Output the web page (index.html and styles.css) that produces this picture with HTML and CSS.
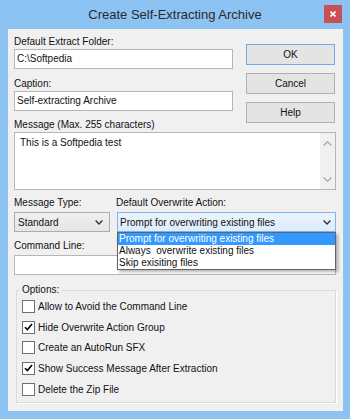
FILE: index.html
```html
<!DOCTYPE html>
<html lang="en">
<head>
    <meta charset="UTF-8">
    <title>Create Self-Extracting Archive</title>
    <link rel="stylesheet" href="styles.css">
</head>
<body>
<div class="window">
    <div class="titlebar">
        <span></span>
        <span class="title">Create Self-Extracting Archive</span>
        <span class="close">
            <svg width="6" height="6" viewBox="0 0 6 6"><path d="M0.5 0.5 L5.5 5.5 M5.5 0.5 L0.5 5.5" stroke="#fff" stroke-width="1.6"/></svg>
        </span>
    </div>

    <div class="dialog">
        <div class="top">
            <div class="fields">
                <div class="label">Default Extract Folder:</div>
                <div class="textbox">C:\Softpedia</div>
                <div class="label">Caption:</div>
                <div class="textbox">Self-extracting Archive</div>
                <div class="label msg-label">Message (Max. 255 characters)</div>
            </div>
            <div class="buttons">
                <div class="btn default">OK</div>
                <div class="btn">Cancel</div>
                <div class="btn">Help</div>
            </div>
        </div>

        <div class="memo">
            <div class="memo-text">This is a Softpedia test</div>
            <div class="vscroll">
                <svg width="9" height="5" viewBox="0 0 9 5"><path d="M0.5 4.5 L4.5 0.8 L8.5 4.5" fill="none" stroke="#a8a8a8" stroke-width="1.3"/></svg>
                <svg width="9" height="5" viewBox="0 0 9 5"><path d="M0.5 0.5 L4.5 4.2 L8.5 0.5" fill="none" stroke="#a8a8a8" stroke-width="1.3"/></svg>
            </div>
        </div>

        <div class="combo-row">
            <div class="combo-col type">
                <div class="label">Message Type:</div>
                <div class="combo">
                    <span>Standard</span>
                    <svg width="8" height="5" viewBox="0 0 8 5"><path d="M0.6 0.6 L4 4 L7.4 0.6" fill="none" stroke="#333" stroke-width="1.4"/></svg>
                </div>
            </div>
            <div class="combo-col action">
                <div class="label">Default Overwrite Action:</div>
                <div class="combo-wrap">
                    <div class="combo hot">
                        <span>Prompt for overwriting existing files</span>
                        <svg width="8" height="5" viewBox="0 0 8 5"><path d="M0.6 0.6 L4 4 L7.4 0.6" fill="none" stroke="#333" stroke-width="1.4"/></svg>
                    </div>
                    <ul class="droplist">
                        <li class="sel">Prompt for overwriting existing files</li>
                        <li>Always&nbsp; overwrite existing files</li>
                        <li>Skip exisiting files</li>
                    </ul>
                </div>
            </div>
        </div>

        <div class="label cmd-label">Command Line:</div>
        <div class="textbox cmd"></div>

        <fieldset class="options">
            <legend>Options:</legend>
            <div class="opt"><span class="box"></span>Allow to Avoid the Command Line</div>
            <div class="opt"><span class="box"><svg width="9" height="8" viewBox="0 0 9 8"><path d="M1 4.2 L3.4 6.6 L8 1" fill="none" stroke="#000" stroke-width="1.6"/></svg></span>Hide Overwrite Action Group</div>
            <div class="opt"><span class="box"></span>Create an AutoRun SFX</div>
            <div class="opt"><span class="box"><svg width="9" height="8" viewBox="0 0 9 8"><path d="M1 4.2 L3.4 6.6 L8 1" fill="none" stroke="#000" stroke-width="1.6"/></svg></span>Show Success Message After Extraction</div>
            <div class="opt"><span class="box"></span>Delete the Zip File</div>
        </fieldset>
    </div>
</div>
</body>
</html>
```

FILE: styles.css
```css
body {
    margin: 0;
    font-family: "Liberation Sans", Arial, sans-serif;
    font-size: 10px;
    color: #111;
}
.window {
    width: 350px;
    height: 419px;
    background: #8cc3f3;
    display: flex;
    flex-direction: column;
}
/* Title bar */
.titlebar {
    height: 29px;
    display: grid;
    grid-template-columns: 1fr auto 1fr;
    align-items: center;
}
.title {
    font-size: 13px;
    color: #2a2a2a;
}
.close {
    justify-self: end;
    align-self: start;
    margin: 5px 8px 0 0;
    width: 18px;
    height: 18px;
    background: #c85151;
    display: flex;
    align-items: center;
    justify-content: center;
}
/* Dialog body */
.dialog {
    margin: 0 7px 0 8px;
    height: 382px;
    box-sizing: border-box;
    background: #f0f0f0;
    padding: 6px 7px 0 6px;
}
.label {
    height: 14px;
    line-height: 14px;
    white-space: nowrap;
}
.textbox {
    height: 20px;
    box-sizing: border-box;
    border: 1px solid #b4b6bb;
    background: #fff;
    line-height: 18px;
    padding-left: 2px;
}
.textbox + .label {
    margin-top: 8px;
}
.fields .msg-label {
    margin-top: 7px;
}
.top {
    display: grid;
    grid-template-columns: 219px 89px;
    column-gap: 13px;
}
.fields {
    display: flex;
    flex-direction: column;
}
.buttons {
    display: flex;
    flex-direction: column;
    gap: 8px;
    padding-top: 9px;
}
.btn {
    height: 21px;
    box-sizing: border-box;
    border: 1px solid #b0b0b0;
    background: #e4e4e4;
    line-height: 19px;
    text-align: center;
}
.btn.default {
    border-color: #6eaaea;
}
/* Message box */
.memo {
    height: 58px;
    box-sizing: border-box;
    border: 1px solid #b4b6bb;
    background: #fff;
    display: flex;
}
.memo-text {
    flex: 1;
    padding: 3px 5px;
    line-height: 14px;
}
.vscroll {
    width: 15px;
    background: #f0f0f0;
    display: flex;
    flex-direction: column;
    justify-content: space-between;
    align-items: center;
    padding: 8px 0 7px;
}
/* Combo boxes */
.combo-row {
    display: flex;
    gap: 7px;
    margin-top: 6px;
}
.combo-col.type {
    width: 96px;
}
.combo-col.action {
    width: 219px;
}
.combo-col .label {
    margin-bottom: 2px;
}
.combo-col.action .label {
    margin-left: -1px;
}
.combo-wrap {
    position: relative;
}
.combo {
    height: 20px;
    box-sizing: border-box;
    border: 1px solid #acacac;
    background: linear-gradient(#f0f0f0, #e5e5e5);
    display: flex;
    align-items: center;
    justify-content: space-between;
    padding: 0 6px 0 3px;
}
.combo.hot {
    border-color: #7eb4ea;
    background: linear-gradient(#ecf4fc, #dcecfc);
    padding: 0 4px 0 2px;
}
.droplist {
    position: absolute;
    top: 100%;
    left: 0;
    right: 0;
    margin: 0;
    padding: 0;
    list-style: none;
    background: #fff;
    border: 1px solid #646464;
    box-shadow: 2px 2px 3px rgba(0, 0, 0, 0.3);
    z-index: 2;
}
.droplist li {
    line-height: 12px;
    padding-left: 1px;
    white-space: nowrap;
}
.droplist li.sel {
    background: #3399ff;
    color: #fff;
}
/* Command line */
.cmd-label {
    margin-top: 7px;
    margin-bottom: 2px;
}
/* Options group */
.options {
    margin: 9px 0 0 2px;
    padding: 0 0 3px 5px;
    border: 1px solid #dcdcdc;
    box-shadow: 1px 1px 0 #fff;
    min-width: 0;
}
.options legend {
    padding: 0 2px;
    margin-left: -2px;
    line-height: 12px;
}
.opt {
    height: 20.7px;
    display: flex;
    align-items: center;
    gap: 3px;
}
.box {
    width: 13px;
    height: 13px;
    box-sizing: border-box;
    border: 1px solid #707070;
    background: #fff;
    display: flex;
    align-items: center;
    justify-content: center;
}
```
